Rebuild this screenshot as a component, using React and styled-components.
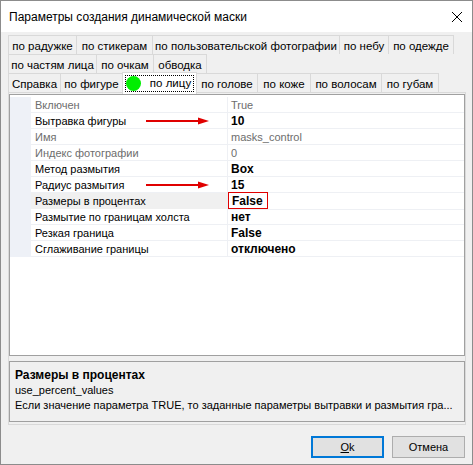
import styled, { createGlobalStyle } from "styled-components";

const GlobalStyle = createGlobalStyle`
  html, body {
    margin: 0;
    padding: 0;
    background: #f0f0f0;
    overflow: hidden;
  }
  * {
    box-sizing: border-box;
  }
`;

const Window = styled.div`
  width: 473px;
  height: 465px;
  border: 1px solid #8c8c8c;
  background: #f0f0f0;
  display: flex;
  flex-direction: column;
  font-family: "Liberation Sans", Arial, sans-serif;
  font-size: 11px;
  color: #000;
`;

const TitleBar = styled.div`
  height: 31px;
  background: #fff;
  display: flex;
  align-items: center;
  justify-content: space-between;
  padding: 0 6px 0 8px;
  font-size: 12px;
`;

const CloseIcon = styled.svg`
  width: 12px;
  height: 12px;
  margin-right: 3px;
`;

const TabStrip = styled.div`
  display: flex;
  flex-direction: column;
  padding: 3px 0 0 7px;
  font-size: 11.5px;
`;

const TabRow = styled.div`
  display: flex;
  height: 19px;
`;

const Tab = styled.div`
  width: ${(p) => p.$w}px;
  height: 100%;
  border-top: 1px solid #d9d9d9;
  border-right: 1px solid #d9d9d9;
  border-left: ${(p) => (p.$first ? "1px solid #d9d9d9" : "none")};
  background: #f0f0f0;
  display: flex;
  align-items: center;
  justify-content: center;
  white-space: nowrap;
  padding-top: 1px;
`;

const ActiveTab = styled(Tab)`
  position: relative;
  z-index: 2;
  background: #fff;
  height: calc(100% + 3px);
  margin-top: -1px;
  border-left: 1px solid #d9d9d9;
  margin-left: -1px;
  gap: 9px;
  padding-bottom: 2px;

  &::after {
    content: "";
    position: absolute;
    left: 2px;
    right: 2px;
    top: 2px;
    bottom: 2px;
    border: 1px dotted #000;
  }
`;

const GreenDot = styled.span`
  width: 15px;
  height: 15px;
  border-radius: 50%;
  background: #00ee00;
  margin-left: -2px;
`;

const TabPage = styled.div`
  margin: 0 6px 0 7px;
  height: 333px;
  border: 1px solid #d9d9d9;
  background: #f0f0f0;
  padding: 1px 0 2px 0;
  display: flex;
  flex-direction: column;
  gap: 5px;
`;

const Grid = styled.div`
  height: 263px;
  border: 1px solid #a0a0a0;
  background: #fff;
  padding-top: 2px;
`;

const Row = styled.div`
  display: grid;
  grid-template-columns: 21px 197px 1fr;
  height: 16px;
`;

const Gutter = styled.div`
  background: #eef1f7;
`;

const NameCell = styled.div`
  position: relative;
  border-bottom: 1px solid #eef0f4;
  border-right: 1px solid #eef0f4;
  background: ${(p) => (p.$selected ? "#f0f0f0" : "#fff")};
  color: ${(p) => (p.$disabled ? "#6d6d6d" : "#000")};
  padding-left: 4px;
  display: flex;
  align-items: center;
  white-space: nowrap;
`;

const ValueCell = styled.div`
  border-bottom: 1px solid #eef0f4;
  padding-left: 3px;
  display: flex;
  align-items: center;
  white-space: nowrap;
  color: ${(p) => (p.$disabled ? "#6d6d6d" : "#000")};
  font-weight: ${(p) => (p.$disabled ? "normal" : "bold")};
  font-size: ${(p) => (p.$disabled ? "11px" : "12px")};
`;

const Marked = styled.span`
  border: 1.5px solid #e00000;
  margin-left: -3px;
  padding: 0 4px 0 3px;
  height: 17px;
  display: flex;
  align-items: center;
  margin-top: -1px;
`;

const Arrow = styled.svg`
  position: absolute;
  left: 115px;
  top: 4px;
  width: 63px;
  height: 8px;
`;

const Description = styled.div`
  height: 61px;
  border: 1px solid #a0a0a0;
  padding: 6px 5px 4px;
  display: flex;
  flex-direction: column;
  line-height: 15px;
`;

const DescTitle = styled.div`
  font-weight: bold;
  font-size: 12px;
`;

const ButtonBar = styled.div`
  display: flex;
  justify-content: flex-end;
  gap: 8px;
  padding: 11px 7px 0 0;
`;

const Button = styled.button`
  width: 73px;
  height: 22px;
  font-family: "Liberation Sans", Arial, sans-serif;
  font-size: 11px;
  color: #000;
  background: #e1e1e1;
  border: ${(p) => (p.$primary ? "2px solid #0078d7" : "1px solid #adadad")};
  padding: 0;
`;

const rows = [
  { name: "Включен", value: "True", disabled: true },
  { name: "Вытравка фигуры", value: "10", arrow: true },
  { name: "Имя", value: "masks_control", disabled: true },
  { name: "Индекс фотографии", value: "0", disabled: true },
  { name: "Метод размытия", value: "Box" },
  { name: "Радиус размытия", value: "15", arrow: true },
  { name: "Размеры в процентах", value: "False", selected: true },
  { name: "Размытие по границам холста", value: "нет" },
  { name: "Резкая граница", value: "False" },
  { name: "Сглаживание границы", value: "отключено" },
];

const tabRows = [
  [
    ["по радужке", 69],
    ["по стикерам", 76],
    ["по пользовательской фотографии", 187],
    ["по небу", 49],
    ["по одежде", 65],
  ],
  [
    ["по частям лица", 89],
    ["по очкам", 57],
    ["обводка", 53],
  ],
  [
    ["Справка", 53],
    ["по фигуре", 62],
    ["по лицу", 75, true],
    ["по голове", 61],
    ["по коже", 53],
    ["по волосам", 71],
    ["по губам", 57],
  ],
];

const RedArrow = () => (
  <Arrow viewBox="0 0 63 8">
    <line x1="0" y1="4" x2="54" y2="4" stroke="#e00000" strokeWidth="2" />
    <polygon points="52,0.5 63,4 52,7.5" fill="#e00000" />
  </Arrow>
);

export default function App() {
  return (
    <>
      <GlobalStyle />
      <Window>
        <TitleBar>
          <span>Параметры создания динамической маски</span>
          <CloseIcon viewBox="0 0 12 12">
            <path d="M1 1 L11 11 M11 1 L1 11" stroke="#000" strokeWidth="1" />
          </CloseIcon>
        </TitleBar>

        <TabStrip>
          {tabRows.map((row, ri) => (
            <TabRow key={ri}>
              {row.map(([label, w, active], i) =>
                active ? (
                  <ActiveTab key={label} $w={w}>
                    <GreenDot />
                    {label}
                  </ActiveTab>
                ) : (
                  <Tab key={label} $w={w} $first={i === 0}>
                    {label}
                  </Tab>
                )
              )}
            </TabRow>
          ))}
        </TabStrip>

        <TabPage>
          <Grid>
            {rows.map((r) => (
              <Row key={r.name}>
                <Gutter />
                <NameCell $disabled={r.disabled} $selected={r.selected}>
                  {r.name}
                  {r.arrow && <RedArrow />}
                </NameCell>
                <ValueCell $disabled={r.disabled}>
                  {r.selected ? <Marked>{r.value}</Marked> : r.value}
                </ValueCell>
              </Row>
            ))}
          </Grid>
          <Description>
            <DescTitle>Размеры в процентах</DescTitle>
            <div>use_percent_values</div>
            <div>
              Если значение параметра TRUE, то заданные параметры вытравки и
              размытия гра...
            </div>
          </Description>
        </TabPage>

        <ButtonBar>
          <Button $primary>
            <u>O</u>k
          </Button>
          <Button>Отмена</Button>
        </ButtonBar>
      </Window>
    </>
  );
}
